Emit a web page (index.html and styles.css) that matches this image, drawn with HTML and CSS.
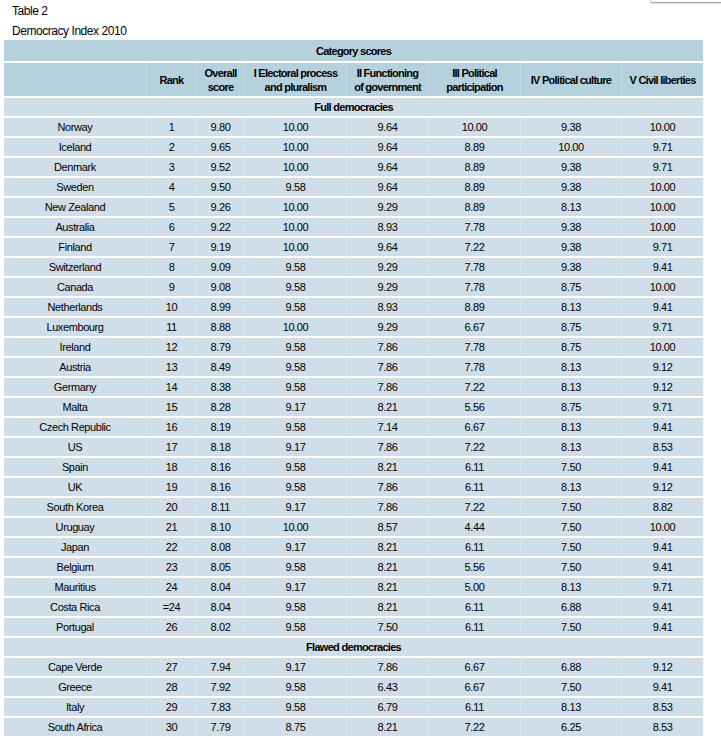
FILE: index.html
```html
<!DOCTYPE html>
<html>
<head>
<meta charset="utf-8">
<title>Democracy Index 2010</title>
<link rel="stylesheet" href="styles.css">
</head>
<body>
<div class="corner"></div>
<div class="page">
  <p class="label">Table 2</p>
  <p class="caption">Democracy Index 2010</p>
  <table class="index">
    <colgroup>
      <col class="c-country"><col class="c-rank"><col class="c-overall"><col class="c-i"><col class="c-ii"><col class="c-iii"><col class="c-iv"><col class="c-v">
    </colgroup>
    <thead>
      <tr class="h1"><th colspan="8">Category scores</th></tr>
      <tr class="h2">
        <th></th><th>Rank</th><th>Overall<br>score</th><th>I Electoral process<br>and pluralism</th><th>II Functioning<br>of government</th><th>III Political<br>participation</th><th>IV Political culture</th><th>V Civil liberties</th>
      </tr>
    </thead>
    <tbody>
      <tr class="section"><td colspan="8">Full democracies</td></tr>
      <tr><td>Norway</td><td>1</td><td>9.80</td><td>10.00</td><td>9.64</td><td>10.00</td><td>9.38</td><td>10.00</td></tr>
      <tr><td>Iceland</td><td>2</td><td>9.65</td><td>10.00</td><td>9.64</td><td>8.89</td><td>10.00</td><td>9.71</td></tr>
      <tr><td>Denmark</td><td>3</td><td>9.52</td><td>10.00</td><td>9.64</td><td>8.89</td><td>9.38</td><td>9.71</td></tr>
      <tr><td>Sweden</td><td>4</td><td>9.50</td><td>9.58</td><td>9.64</td><td>8.89</td><td>9.38</td><td>10.00</td></tr>
      <tr><td>New Zealand</td><td>5</td><td>9.26</td><td>10.00</td><td>9.29</td><td>8.89</td><td>8.13</td><td>10.00</td></tr>
      <tr><td>Australia</td><td>6</td><td>9.22</td><td>10.00</td><td>8.93</td><td>7.78</td><td>9.38</td><td>10.00</td></tr>
      <tr><td>Finland</td><td>7</td><td>9.19</td><td>10.00</td><td>9.64</td><td>7.22</td><td>9.38</td><td>9.71</td></tr>
      <tr><td>Switzerland</td><td>8</td><td>9.09</td><td>9.58</td><td>9.29</td><td>7.78</td><td>9.38</td><td>9.41</td></tr>
      <tr><td>Canada</td><td>9</td><td>9.08</td><td>9.58</td><td>9.29</td><td>7.78</td><td>8.75</td><td>10.00</td></tr>
      <tr><td>Netherlands</td><td>10</td><td>8.99</td><td>9.58</td><td>8.93</td><td>8.89</td><td>8.13</td><td>9.41</td></tr>
      <tr><td>Luxembourg</td><td>11</td><td>8.88</td><td>10.00</td><td>9.29</td><td>6.67</td><td>8.75</td><td>9.71</td></tr>
      <tr><td>Ireland</td><td>12</td><td>8.79</td><td>9.58</td><td>7.86</td><td>7.78</td><td>8.75</td><td>10.00</td></tr>
      <tr><td>Austria</td><td>13</td><td>8.49</td><td>9.58</td><td>7.86</td><td>7.78</td><td>8.13</td><td>9.12</td></tr>
      <tr><td>Germany</td><td>14</td><td>8.38</td><td>9.58</td><td>7.86</td><td>7.22</td><td>8.13</td><td>9.12</td></tr>
      <tr><td>Malta</td><td>15</td><td>8.28</td><td>9.17</td><td>8.21</td><td>5.56</td><td>8.75</td><td>9.71</td></tr>
      <tr><td>Czech Republic</td><td>16</td><td>8.19</td><td>9.58</td><td>7.14</td><td>6.67</td><td>8.13</td><td>9.41</td></tr>
      <tr><td>US</td><td>17</td><td>8.18</td><td>9.17</td><td>7.86</td><td>7.22</td><td>8.13</td><td>8.53</td></tr>
      <tr><td>Spain</td><td>18</td><td>8.16</td><td>9.58</td><td>8.21</td><td>6.11</td><td>7.50</td><td>9.41</td></tr>
      <tr><td>UK</td><td>19</td><td>8.16</td><td>9.58</td><td>7.86</td><td>6.11</td><td>8.13</td><td>9.12</td></tr>
      <tr><td>South Korea</td><td>20</td><td>8.11</td><td>9.17</td><td>7.86</td><td>7.22</td><td>7.50</td><td>8.82</td></tr>
      <tr><td>Uruguay</td><td>21</td><td>8.10</td><td>10.00</td><td>8.57</td><td>4.44</td><td>7.50</td><td>10.00</td></tr>
      <tr><td>Japan</td><td>22</td><td>8.08</td><td>9.17</td><td>8.21</td><td>6.11</td><td>7.50</td><td>9.41</td></tr>
      <tr><td>Belgium</td><td>23</td><td>8.05</td><td>9.58</td><td>8.21</td><td>5.56</td><td>7.50</td><td>9.41</td></tr>
      <tr><td>Mauritius</td><td>24</td><td>8.04</td><td>9.17</td><td>8.21</td><td>5.00</td><td>8.13</td><td>9.71</td></tr>
      <tr><td>Costa Rica</td><td>=24</td><td>8.04</td><td>9.58</td><td>8.21</td><td>6.11</td><td>6.88</td><td>9.41</td></tr>
      <tr><td>Portugal</td><td>26</td><td>8.02</td><td>9.58</td><td>7.50</td><td>6.11</td><td>7.50</td><td>9.41</td></tr>
      <tr class="section"><td colspan="8">Flawed democracies</td></tr>
      <tr><td>Cape Verde</td><td>27</td><td>7.94</td><td>9.17</td><td>7.86</td><td>6.67</td><td>6.88</td><td>9.12</td></tr>
      <tr><td>Greece</td><td>28</td><td>7.92</td><td>9.58</td><td>6.43</td><td>6.67</td><td>7.50</td><td>9.41</td></tr>
      <tr><td>Italy</td><td>29</td><td>7.83</td><td>9.58</td><td>6.79</td><td>6.11</td><td>8.13</td><td>8.53</td></tr>
      <tr><td>South Africa</td><td>30</td><td>7.79</td><td>8.75</td><td>8.21</td><td>7.22</td><td>6.25</td><td>8.53</td></tr>
      <tr class="filler"><td colspan="8"></td></tr>
    </tbody>
  </table>
</div>
</body>
</html>
```

FILE: styles.css
```css
html, body {
  margin: 0;
  padding: 0;
  background: #ffffff;
  overflow: hidden;
  height: 738px;
}

body {
  font-family: "Liberation Sans", Arial, sans-serif;
  color: #000000;
  position: relative;
}

.corner {
  position: absolute;
  top: 0;
  left: 650px;
  width: 71px;
  height: 2px;
  border-bottom: 1px solid #a9a9a9;
  border-left: 1px solid #c8c8c8;
  border-bottom-left-radius: 2px;
  box-shadow: 0 1px 0 #e2e2e2;
}

.page {
  padding: 1px 0 0 4px;
}

.label,
.caption {
  margin: 0;
  padding-left: 8px;
  font-size: 12px;
  letter-spacing: -0.45px;
  line-height: 20px;
  color: #000000;
}

.caption {
  margin-bottom: -1px;
}

.index {
  border-collapse: separate;
  border-spacing: 0;
  width: 699px;
  table-layout: fixed;
  font-size: 11px;
  letter-spacing: -0.4px;
  color: #000000;
}

.c-country { width: 142px; }
.c-rank { width: 50px; }
.c-overall { width: 48px; }
.c-i { width: 102px; }
.c-ii { width: 82px; }
.c-iii { width: 92px; }
.c-iv { width: 101px; }
.c-v { width: 82px; }

.index th,
.index td {
  padding: 0;
  text-align: center;
  vertical-align: middle;
  white-space: nowrap;
}

.index th {
  background: #b5d1de;
  font-weight: bold;
  letter-spacing: -0.75px;
  line-height: 14px;
  color: #000000;
}

.h1 th {
  height: 21px;
}

.h2 th {
  height: 33px;
  border-top: 2px solid #ffffff;
}

.h2 th + th {
  border-left: 1px solid rgba(255, 255, 255, 0.25);
}

.index td {
  background: #cfdee8;
  height: 18px;
  line-height: 18px;
  border-top: 2px solid #ffffff;
}

.index td + td {
  border-left: 1px solid rgba(255, 255, 255, 0.3);
}

.section td {
  font-weight: bold;
  letter-spacing: -0.7px;
}
```
